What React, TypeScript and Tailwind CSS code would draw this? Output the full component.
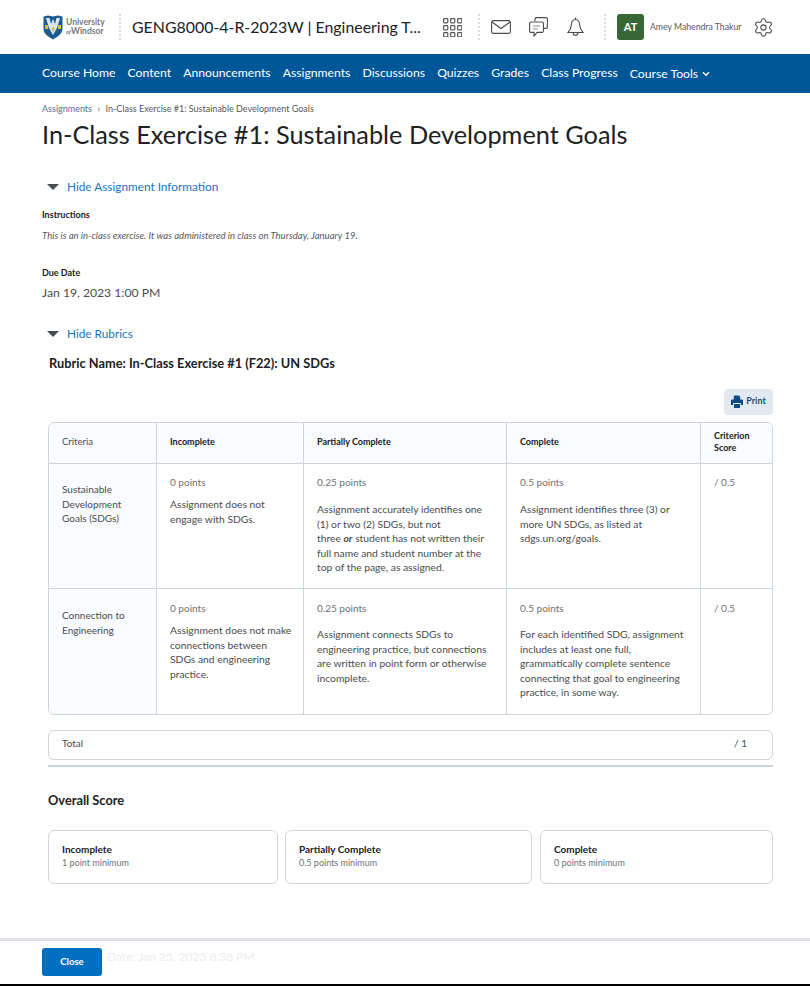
import React from "react";
import { Settings } from "lucide-react";

const navItems = ["Course Home", "Content", "Announcements", "Assignments", "Discussions", "Quizzes", "Grades", "Class Progress"];

const Dots = () => (
  <div className="h-[26px] border-l-2 border-dotted border-[#d3dbe6]" />
);

const Logo = () => (
  <svg width="20" height="25" viewBox="0 0 20 25">
    <path d="M0.5 1.5 L5 0.5 L10 1.5 L15 0.5 L19.5 1.5 L19.5 14 C19.5 19 14 22 10 24.5 C6 22 0.5 19 0.5 14 Z" fill="#1d5c92" />
    <path d="M3 3 L6.5 3 L8 9 L10 4 L12 9 L13.5 3 L17 3 L14 13 L10 20 L6 13 Z" fill="#dbe7ef" />
    <path d="M8.6 14 L10 11.5 L11.4 14 L10 17 Z" fill="#d8bb3c" />
    <rect x="2" y="10" width="3" height="4" fill="#d8bb3c" />
    <rect x="15" y="10" width="3" height="4" fill="#d8bb3c" />
  </svg>
);

const TriangleToggle = ({ label }: { label: string }) => (
  <div className="flex items-center pl-[5px] text-[11.8px] leading-4 text-[#1c74bb]">
    <span className="mr-[8px] h-0 w-0 border-x-[6px] border-t-[6px] border-x-transparent border-t-[#494c4e]" />
    {label}
  </div>
);

type Level = { points: string; text: React.ReactNode };

const Row = ({ name, levels, score, top, pointsTop, bodyGap }: { name: React.ReactNode; levels: Level[]; score: string; top: string; pointsTop: string; bodyGap: string[] }) => (
  <>
    <div className={`bg-[#f9fbff] px-[13px] text-[10px] leading-[14.5px] text-[#494c4e] ${top}`}>{name}</div>
    {levels.map((l, i) => (
      <div key={l.points} className="border-l border-[#cdd5dc] px-[13px] text-[#494c4e]">
        <p className={`text-[10px] leading-[15px] text-[#6e7376] ${pointsTop}`}>{l.points}</p>
        <p className={`text-[10.3px] leading-[14.6px] whitespace-nowrap ${bodyGap[i]}`}>{l.text}</p>
      </div>
    ))}
    <div className={`border-l border-[#cdd5dc] px-[13px] text-[10px] leading-[15px] text-[#6e7376] ${pointsTop}`}>{score}</div>
  </>
);

const ScoreCard = ({ title, sub, className }: { title: string; sub: string; className: string }) => (
  <div className={`h-[54px] rounded-md border border-[#cdd5dc] pt-[12px] pl-[13px] ${className}`}>
    <p className="text-[10px] leading-[13px] font-bold text-[#202122]">{title}</p>
    <p className="text-[9px] leading-[13px] text-[#6e7376]">{sub}</p>
  </div>
);

const App = () => {
  return (
    <div className="relative h-[986px] w-[810px] overflow-hidden bg-white font-['Lato',sans-serif]">
      {/* top bar */}
      <header className="flex h-[54px] items-center pl-[43px]">
        <Logo />
        <div className="ml-[3px] w-[42px] shrink-0 text-[8.5px] leading-[9px] font-bold text-[#77797c]">
          <div>University</div>
          <div><span className="text-[6px] italic">of</span>Windsor</div>
        </div>
        <div className="ml-[11px]"><Dots /></div>
        <div className="ml-[11px] w-[289px] shrink-0 text-[15.9px] leading-6 whitespace-nowrap text-[#202122]">
          GENG8000-4-R-2023W | Engineering T...
        </div>
        <svg className="ml-[22px] shrink-0" width="19" height="19" viewBox="0 0 19 19" fill="none" stroke="#56595c" strokeWidth="1.2">
          {[0, 7, 14].map((y) =>
            [0, 7, 14].map((x) => <rect key={`${x}-${y}`} x={x + 0.6} y={y + 0.6} width="4.2" height="4.2" rx="0.8" />)
          )}
        </svg>
        <div className="ml-[16px]"><Dots /></div>
        <svg className="ml-[11px] shrink-0" width="20" height="14" viewBox="0 0 20 14" fill="none" stroke="#494c4e" strokeWidth="1.1">
          <rect x="0.6" y="0.6" width="18.8" height="12.8" rx="1.8" />
          <path d="M1 2 L10 8.5 L19 2" />
        </svg>
        <svg className="ml-[18px] shrink-0" width="19" height="20" viewBox="0 0 19 20" fill="none" stroke="#494c4e" strokeWidth="1.1">
          <path d="M6 4 V2 a1.4 1.4 0 0 1 1.4 -1.4 H17 a1.4 1.4 0 0 1 1.4 1.4 V10 a1.4 1.4 0 0 1 -1.4 1.4 H14.5" />
          <path d="M2 5 H13 a1.4 1.4 0 0 1 1.4 1.4 V14 a1.4 1.4 0 0 1 -1.4 1.4 H8 L5 19 V15.4 H2 a1.4 1.4 0 0 1 -1.4 -1.4 V6.4 A1.4 1.4 0 0 1 2 5 Z" />
          <path d="M4 9 H11 M4 12 H9" stroke="#8a8d90" />
        </svg>
        <svg className="ml-[19px] shrink-0" width="17" height="20" viewBox="0 0 17 20" fill="none" stroke="#494c4e" strokeWidth="1.1">
          <path d="M8.5 2.5 C5.5 2.5 4.5 5 4.3 8 C4.1 11.5 3 13.5 1 15.5 H16 C14 13.5 12.9 11.5 12.7 8 C12.5 5 11.5 2.5 8.5 2.5 Z" />
          <path d="M8.5 0.6 V2.5 M6.2 16 a2.3 2.3 0 0 0 4.6 0" />
        </svg>
        <div className="ml-[20px]"><Dots /></div>
        <div className="ml-[11px] flex h-[26px] w-[27px] shrink-0 items-center justify-center rounded-[3px] bg-[#376734] text-[11px] font-bold text-white">AT</div>
        <span className="ml-[6px] w-[92px] shrink-0 text-[8.7px] whitespace-nowrap text-[#56595c]">Amey Mahendra Thakur</span>
        <Settings className="ml-[11px] shrink-0" size={21} strokeWidth={1.2} color="#494c4e" />
      </header>

      {/* nav */}
      <nav className="flex h-[39px] items-center gap-[12.15px] bg-[#005797] pl-[42px] text-[12.2px] text-white">
        {navItems.map((item) => (
          <span key={item} className="whitespace-nowrap">{item}</span>
        ))}
        <span className="flex items-center gap-[4px] pt-[1px] whitespace-nowrap">
          Course Tools
          <svg width="8" height="6" viewBox="0 0 8 6" fill="none" stroke="white" strokeWidth="1.5"><path d="M1 1.2 L4 4.2 L7 1.2" /></svg>
        </span>
      </nav>

      <main className="px-[42px]">
        <div className="flex h-[29px] items-center pt-[3px] text-[9px] text-[#56595c]">
          <span className="text-[#5a6b8c]">Assignments</span>
          <span className="mx-[5.5px]">›</span>
          <span>In-Class Exercise #1: Sustainable Development Goals</span>
        </div>
        <h1 className="text-[25.3px] leading-[24px] whitespace-nowrap text-[#202122]">In-Class Exercise #1: Sustainable Development Goals</h1>

        <div className="mt-[33px]"><TriangleToggle label="Hide Assignment Information" /></div>
        <p className="mt-[13px] text-[9px] leading-[13px] font-bold text-[#202122]">Instructions</p>
        <p className="mt-[8px] text-[9.55px] leading-[13px] text-[#56595c] italic">This is an in-class exercise. It was administered in class on Thursday, January 19.</p>
        <p className="mt-[24px] text-[9px] leading-[13px] font-bold text-[#202122]">Due Date</p>
        <p className="mt-[5px] text-[12.2px] leading-[18px] text-[#494c4e]">Jan 19, 2023 1:00 PM</p>
        <div className="mt-[24px]"><TriangleToggle label="Hide Rubrics" /></div>
        <p className="mt-[12px] ml-[7px] text-[12.8px] leading-[18px] font-bold text-[#202122]">Rubric Name: In-Class Exercise #1 (F22): UN SDGs</p>

        <div className="ml-[6px] w-[725px]">
          <div className="mt-[17px] flex justify-end">
            <div className="flex h-[26px] w-[49px] items-center justify-center gap-[3px] rounded-[4px] bg-[#e3e9f1] pb-[2px] text-[9px] font-bold text-[#1f4d7a]">
              <svg width="12" height="13" viewBox="0 0 12 13" fill="#0f4c81">
                <path d="M3 0.5 H8 L9.2 1.7 V4.5 H2.8 V0.9 Z M0 5.5 a1 1 0 0 1 1 -1 H11 a1 1 0 0 1 1 1 V10 H9.8 V8 H2.2 V10 H0 Z M3 9 H9 V13 H3 Z" />
              </svg>
              Print
            </div>
          </div>

          {/* rubric */}
          <div className="mt-[7px] grid grid-cols-[107px_147px_203px_194px_1fr] grid-rows-[40px_125px_126px] overflow-hidden rounded-md border border-[#cdd5dc] [&>*:nth-child(n+6)]:border-t [&>*:nth-child(n+6)]:border-t-[#cdd5dc]">
            <div className="flex items-center bg-[#f9fbff] px-[13px] pb-[2px] text-[9.5px] text-[#494c4e]">Criteria</div>
            <div className="flex items-center border-l border-[#cdd5dc] bg-[#f9fbff] px-[13px] pb-[2px] text-[9px] font-bold text-[#202122]">Incomplete</div>
            <div className="flex items-center border-l border-[#cdd5dc] bg-[#f9fbff] px-[13px] pb-[2px] text-[9px] font-bold text-[#202122]">Partially Complete</div>
            <div className="flex items-center border-l border-[#cdd5dc] bg-[#f9fbff] px-[13px] pb-[2px] text-[9px] font-bold text-[#202122]">Complete</div>
            <div className="flex items-center border-l border-[#cdd5dc] bg-[#f9fbff] px-[13px] pb-[2px] text-[9px] leading-3 font-bold text-[#202122]">Criterion Score</div>
            <Row
              top="pt-[18px]"
              pointsTop="pt-[11px]"
              name={<>Sustainable<br />Development<br />Goals (SDGs)</>}
              score="/ 0.5"
              bodyGap={["mt-[7px]", "mt-[12px]", "mt-[12px]"]}
              levels={[
                { points: "0 points", text: <>Assignment does not<br />engage with SDGs.</> },
                { points: "0.25 points", text: <>Assignment accurately identifies one<br />(1) or two (2) SDGs, but not<br />three <b><i>or</i></b> student has not written their<br />full name and student number at the<br />top of the page, as assigned.</> },
                { points: "0.5 points", text: <>Assignment identifies three (3) or<br />more UN SDGs, as listed at<br />sdgs.un.org/goals.</> },
              ]}
            />
            <Row
              top="pt-[19px]"
              pointsTop="pt-[12px]"
              name={<>Connection to<br />Engineering</>}
              score="/ 0.5"
              bodyGap={["mt-[7px]", "mt-[11px]", "mt-[11px]"]}
              levels={[
                { points: "0 points", text: <>Assignment does not make<br />connections between<br />SDGs and engineering<br />practice.</> },
                { points: "0.25 points", text: <>Assignment connects SDGs to<br />engineering practice, but connections<br />are written in point form or otherwise<br />incomplete.</> },
                { points: "0.5 points", text: <>For each identified SDG, assignment<br />includes at least one full,<br />grammatically complete sentence<br />connecting that goal to engineering<br />practice, in some way.</> },
              ]}
            />
          </div>

          {/* total */}
          <div className="mt-[15px] flex h-[30px] items-center justify-between rounded-md border border-[#cdd5dc] pr-[25px] pb-[3px] pl-[13px] text-[10px] text-[#494c4e]">
            <span>Total</span>
            <span>/ 1</span>
          </div>
          <div className="mt-[5px] h-[2px] bg-[#cdd5dc]" />

          <h2 className="mt-[24px] text-[12.8px] leading-[18px] font-bold text-[#202122]">Overall Score</h2>

          <div className="mt-[21px] flex">
            <ScoreCard title="Incomplete" sub="1 point minimum" className="w-[230px]" />
            <ScoreCard title="Partially Complete" sub="0.5 points minimum" className="ml-[7px] w-[247px]" />
            <ScoreCard title="Complete" sub="0 points minimum" className="ml-[8px] w-[233px]" />
          </div>
        </div>
      </main>

      {/* sticky footer over the page */}
      <footer className="absolute bottom-0 left-0 flex h-[48px] w-full items-start border-t-[3px] border-b-[2px] border-t-[#dfe2e6] border-b-black bg-white pt-[7px] pl-[42px]">
        <div className="flex h-[28px] w-[60px] items-center justify-center rounded-[3px] bg-[#006fbf] text-[9.5px] font-bold text-white">Close</div>
        <span className="ml-[5px] text-[12px] leading-[18px] text-[#eceef0]">Date: Jan 25, 2023 8:38 PM</span>
      </footer>
    </div>
  );
};

export default App;
